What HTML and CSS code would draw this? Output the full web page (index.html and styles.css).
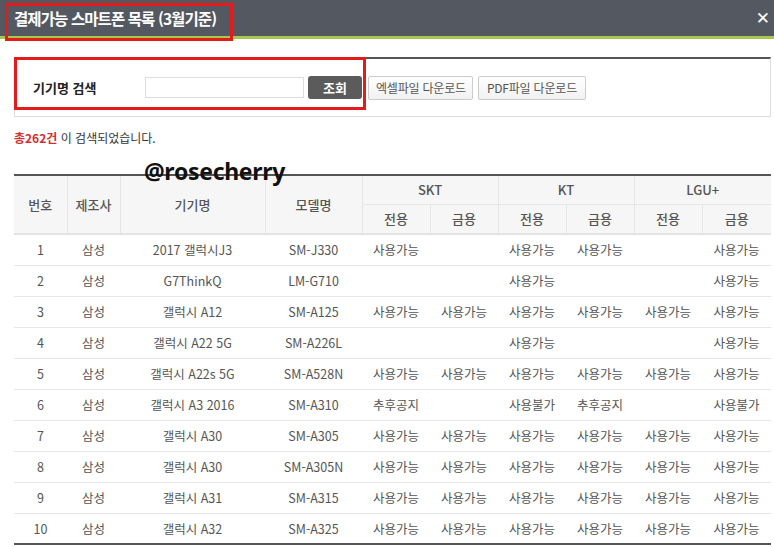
FILE: index.html
```html
<!DOCTYPE html>
<html lang="ko">
<head>
<meta charset="utf-8">
<link rel="stylesheet" href="styles.css">
</head>
<body>
<div class="popup">
  <div class="topbar">
    <h1 class="title">결제가능 스마트폰 목록 (3월기준)</h1>
    <span class="close">&#x2715;</span>
    <div class="mark mark-title"></div>
  </div>
  <div class="content">
    <div class="search">
      <span class="label">기기명 검색</span>
      <input class="field" type="text">
      <button class="btn-go">조회</button>
      <button class="btn-dl">엑셀파일 다운로드</button>
      <button class="btn-dl">PDF파일 다운로드</button>
      <div class="mark mark-search"></div>
    </div>
    <p class="count"><span class="num">총262건</span> 이 검색되었습니다.</p>
    <div class="tablewrap">
      <span class="watermark">@rosecherry</span>
      <table class="list">
        <colgroup>
          <col style="width:53px"><col style="width:53px"><col style="width:145px"><col style="width:97px">
          <col style="width:68px"><col style="width:68px"><col style="width:68px"><col style="width:68px"><col style="width:68px"><col style="width:69px">
        </colgroup>
        <thead>
          <tr>
            <th rowspan="2" class="first">번호</th><th rowspan="2">제조사</th><th rowspan="2">기기명</th><th rowspan="2">모델명</th>
            <th colspan="2">SKT</th><th colspan="2">KT</th><th colspan="2">LGU+</th>
          </tr>
          <tr class="sub">
            <th>전용</th><th>금용</th><th>전용</th><th>금용</th><th>전용</th><th>금용</th>
          </tr>
        </thead>
        <tbody>
          <tr><td>1</td><td>삼성</td><td>2017 갤럭시J3</td><td>SM-J330</td><td>사용가능</td><td></td><td>사용가능</td><td>사용가능</td><td></td><td>사용가능</td></tr>
          <tr><td>2</td><td>삼성</td><td>G7ThinkQ</td><td>LM-G710</td><td></td><td></td><td>사용가능</td><td></td><td></td><td>사용가능</td></tr>
          <tr><td>3</td><td>삼성</td><td>갤럭시 A12</td><td>SM-A125</td><td>사용가능</td><td>사용가능</td><td>사용가능</td><td>사용가능</td><td>사용가능</td><td>사용가능</td></tr>
          <tr><td>4</td><td>삼성</td><td>갤럭시 A22 5G</td><td>SM-A226L</td><td></td><td></td><td>사용가능</td><td></td><td></td><td>사용가능</td></tr>
          <tr><td>5</td><td>삼성</td><td>갤럭시 A22s 5G</td><td>SM-A528N</td><td>사용가능</td><td>사용가능</td><td>사용가능</td><td>사용가능</td><td>사용가능</td><td>사용가능</td></tr>
          <tr><td>6</td><td>삼성</td><td>갤럭시 A3 2016</td><td>SM-A310</td><td>추후공지</td><td></td><td>사용불가</td><td>추후공지</td><td></td><td>사용불가</td></tr>
          <tr><td>7</td><td>삼성</td><td>갤럭시 A30</td><td>SM-A305</td><td>사용가능</td><td>사용가능</td><td>사용가능</td><td>사용가능</td><td>사용가능</td><td>사용가능</td></tr>
          <tr><td>8</td><td>삼성</td><td>갤럭시 A30</td><td>SM-A305N</td><td>사용가능</td><td>사용가능</td><td>사용가능</td><td>사용가능</td><td>사용가능</td><td>사용가능</td></tr>
          <tr><td>9</td><td>삼성</td><td>갤럭시 A31</td><td>SM-A315</td><td>사용가능</td><td>사용가능</td><td>사용가능</td><td>사용가능</td><td>사용가능</td><td>사용가능</td></tr>
          <tr><td>10</td><td>삼성</td><td>갤럭시 A32</td><td>SM-A325</td><td>사용가능</td><td>사용가능</td><td>사용가능</td><td>사용가능</td><td>사용가능</td><td>사용가능</td></tr>
        </tbody>
      </table>
    </div>
  </div>
</div>
</body>
</html>
```

FILE: styles.css
```css
* { box-sizing: border-box; }
html, body { margin: 0; padding: 0; background: #fff; }
body {
  font-family: "Noto Sans CJK KR", "Noto Sans", sans-serif;
  color: #555;
  width: 774px;
  height: 547px;
  overflow: hidden;
}
.popup { width: 774px; }
.topbar {
  position: relative;
  height: 39px;
  background: #545861;
  border-bottom: 3px solid #a6c84c;
  display: flex;
  align-items: center;
  justify-content: space-between;
  padding: 0 4px 0 14px;
}
.title {
  margin: 0;
  color: #fff;
  font-size: 15.5px;
  font-weight: 700;
  letter-spacing: -0.9px;
  line-height: 36px;
}
.close {
  color: #fff;
  font-family: "DejaVu Sans", sans-serif;
  font-weight: 700;
  font-size: 17px;
  line-height: 36px;
}
.mark {
  position: absolute;
  border: 3px solid #e41b1b;
  pointer-events: none;
}
.mark-title { left: 5px; top: 3px; width: 228px; height: 38px; }
.content { padding: 0 3px 0 14px; }
.search {
  position: relative;
  margin-top: 18px;
  height: 60px;
  border-top: 2px solid #555;
  border-left: 1px solid #ddd;
  border-right: 1px solid #ddd;
  border-bottom: 1px solid #ddd;
  display: flex;
  align-items: center;
  padding-left: 18px;
}
.mark-search { left: -1px; top: -2px; width: 352px; height: 53px; }
.label {
  width: 112px;
  font-size: 13px;
  font-weight: 700;
  color: #222;
}
.field {
  width: 159px;
  height: 21px;
  border: 1px solid #ddd;
  margin: 0;
  padding: 0;
  outline: none;
}
.btn-go {
  margin-left: 4px;
  width: 54px;
  height: 23px;
  border: none;
  border-radius: 3px;
  background: #5b5b5b;
  color: #fff;
  font-family: inherit;
  font-weight: 700;
  font-size: 13px;
  padding: 0;
}
.btn-dl {
  margin-left: 6px;
  height: 24px;
  padding: 0 6px 0 7px;
  border: 1px solid #ccc;
  border-radius: 2px;
  background: linear-gradient(#fff, #f1f1f1);
  color: #555;
  font-family: inherit;
  font-size: 12px;
  letter-spacing: -0.2px;
}
.btn-dl + .btn-dl { margin-left: 5px; padding: 0 8px; }
.count {
  margin: 12px 0 0;
  font-size: 12px;
  color: #333;
  line-height: 18px;
}
.num { color: #d32f2f; font-weight: 700; }
.tablewrap { position: relative; margin-top: 27px; }
.watermark {
  position: absolute;
  left: 130px;
  top: -16px;
  font-family: "Noto Sans", sans-serif;
  font-weight: 700;
  font-size: 23px;
  color: #111;
  line-height: 26px;
  letter-spacing: -0.3px;
  z-index: 2;
}
.list {
  width: 757px;
  border-collapse: collapse;
  table-layout: fixed;
  border-top: 2px solid #555;
  border-bottom: 2px solid #555;
  font-size: 12.5px;
}
.list th {
  background: #f6f6f6;
  font-weight: 500;
  color: #555;
  border-left: 1px solid #e6e6e6;
  height: 29px;
  padding: 0;
  font-size: 13px;
}
.list th.first { border-left: none; }
.list tr.sub th { border-top: 1px solid #e6e6e6; height: 30px; }
.list thead { border-bottom: 2px solid #e3e3e3; }
.list td {
  height: 31px;
  padding: 0;
  text-align: center;
  border-bottom: 1px solid #e6e6e6;
  color: #555;
  white-space: nowrap;
}
.list tbody tr:last-child td { border-bottom: none; }
```
